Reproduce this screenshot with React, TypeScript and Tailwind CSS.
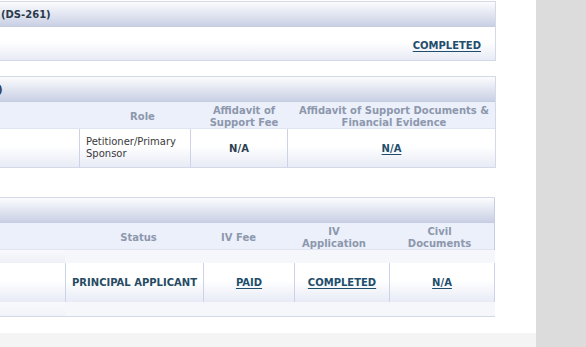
import React from "react";

const hdr = "h-[25px] border-b border-[#c6cde1] bg-linear-to-b from-[#fbfcfd] to-[#cad0e5] flex items-center text-[10px] font-bold text-[#2a3a4c] overflow-hidden whitespace-nowrap";
const colHdr = "h-[27px] pt-[3px] bg-[#ebf0fa] border-b border-[#e0e5f1] text-[10px] leading-[12px] font-bold text-[#8d97ad]";
const cellGrad = "bg-linear-to-b from-white from-45% to-[#e8ebf6]";
const link = "font-bold text-[#1f4d6c] underline underline-offset-[2px] text-[10px]";

export default function App() {
  return (
    <div className="flex h-[347px] w-[586px] overflow-hidden font-['DejaVu_Sans',Verdana,sans-serif]">
      <div className="w-[536px] flex flex-col bg-white">
        <div className="flex-1 flex flex-col">
          {/* Panel 1 */}
          <div className="mt-[1px] w-[496px] border-t border-r border-b border-[#d4d9e7]">
            <div className={hdr + " pl-[1px]"}>(DS-261)</div>
            <div className={"h-[33px] pt-[4px] flex items-center justify-end pr-[14px] " + cellGrad}>
              <span className={link}>COMPLETED</span>
            </div>
          </div>

          {/* Panel 2 */}
          <div className="mt-[15px] w-[496px] border-t border-r border-b border-[#d4d9e7]">
            <div className={hdr}>
              <span className="-ml-[2px]">)</span>
            </div>
            <div className={colHdr + " grid grid-cols-[90px_105px_98px_1fr] items-center text-center"}>
              <div></div>
              <div>Role</div>
              <div>Affidavit of<br />Support Fee</div>
              <div>Affidavit of Support Documents &amp;<br />Financial Evidence</div>
            </div>
            <div className="h-[38px] grid grid-cols-[79px_111px_97px_1fr]">
              <div className={cellGrad}></div>
              <div className={"border-l border-[#cdd3e6] flex items-center pl-[6px] text-[10px] leading-[12px] text-[#3a3a3a] " + cellGrad}>
                Petitioner/Primary<br />Sponsor
              </div>
              <div className={"border-l border-[#cdd3e6] flex items-center justify-center text-[10px] font-bold text-[#2c3e50] " + cellGrad}>
                N/A
              </div>
              <div className={"border-l border-[#cdd3e6] flex items-center justify-center " + cellGrad}>
                <span className={link}>N/A</span>
              </div>
            </div>
          </div>

          {/* Panel 3 */}
          <div className="mt-[29px] w-[495px] border-t border-b border-[#d4d9e7]">
            <div className="border-r border-[#c6cde1]">
              <div className={hdr}></div>
              <div className={colHdr + " grid grid-cols-[83px_111px_89px_102px_1fr] items-center text-center"}>
                <div></div>
                <div>Status</div>
                <div>IV Fee</div>
                <div>IV<br />Application</div>
                <div>Civil<br />Documents</div>
              </div>
            </div>
            <div className="flex">
              <div className="w-[65px] flex flex-col">
                <div className="h-[13px] bg-linear-to-b from-[#f9fafc] to-[#eef0f7]"></div>
                <div className={"h-[39px] " + cellGrad}></div>
                <div className="h-[14px] bg-linear-to-b from-[#f9fafc] to-[#f1f3f8]"></div>
              </div>
              <div className="flex-1 flex flex-col">
                <div className="h-[13px] bg-[#f6f7fa]"></div>
                <div className="h-[39px] grid grid-cols-[138px_91px_95px_1fr] border-r border-[#cdd3e6]">
                  <div className={"border-l border-[#cdd3e6] flex items-center justify-center text-[10px] font-bold text-[#284a63] " + cellGrad}>
                    PRINCIPAL APPLICANT
                  </div>
                  <div className={"border-l border-[#cdd3e6] flex items-center justify-center " + cellGrad}>
                    <span className={link}>PAID</span>
                  </div>
                  <div className={"border-l border-[#cdd3e6] flex items-center justify-center " + cellGrad}>
                    <span className={link}>COMPLETED</span>
                  </div>
                  <div className={"border-l border-[#cdd3e6] flex items-center justify-center " + cellGrad}>
                    <span className={link}>N/A</span>
                  </div>
                </div>
                <div className="h-[14px] bg-[#f6f7fa]"></div>
              </div>
            </div>
          </div>
        </div>
        <div className="h-[14px] bg-[#f4f4f4]"></div>
      </div>
      <div className="flex-1 bg-[#dcdcdc]"></div>
    </div>
  );
}
